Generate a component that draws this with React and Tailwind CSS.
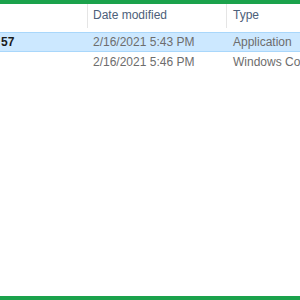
export default function App() {
  const rows = [
    { name: "57", date: "2/16/2021 5:43 PM", type: "Application", selected: true },
    { name: "", date: "2/16/2021 5:46 PM", type: "Windows Command Script", selected: false },
  ];

  return (
    <div className="w-[300px] h-[300px] bg-white border-t-[4px] border-b-[4px] border-[#1ba24c] flex flex-col overflow-hidden font-['Liberation_Sans',Arial,sans-serif] text-[12px]">
      {/* column header */}
      <div className="flex h-[24px] shrink-0">
        <div className="w-[88px] border-r border-[#e5e5e5]" />
        <div className="w-[139px] border-r border-[#e5e5e5] pl-[5px] pb-[2px] flex items-center text-[#4c607a]">Date modified</div>
        <div className="flex-1 pl-[6px] pb-[2px] flex items-center text-[#4c607a] whitespace-nowrap">Type</div>
      </div>

      {/* file rows */}
      <div className="flex flex-col pt-[4px]">
        {rows.map((r, i) => (
          <div
            key={i}
            className={`flex h-[20px] items-center whitespace-nowrap border-y ${r.selected ? "bg-[#cce8ff] border-[#a9d7fb]" : "border-transparent"}`}
          >
            <div className="w-[88px] pl-[1px] text-[#1b1b1b] font-semibold">{r.name}</div>
            <div className="w-[139px] pl-[5px] text-[#6d6d6d]">{r.date}</div>
            <div className="flex-1 pl-[6px] text-[#6d6d6d] overflow-hidden">{r.type}</div>
          </div>
        ))}
      </div>
    </div>
  );
}
